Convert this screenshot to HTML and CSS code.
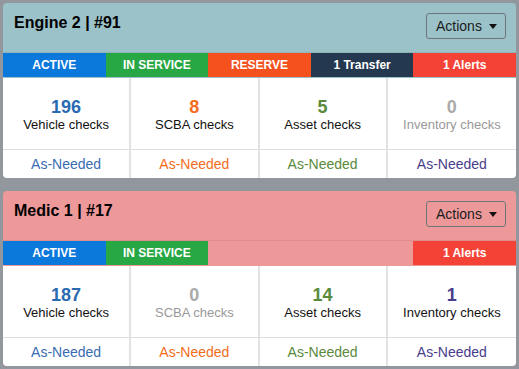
FILE: index.html
```html
<!DOCTYPE html>
<html>
<head>
<meta charset="utf-8">
<link rel="stylesheet" href="styles.css">
</head>
<body>
<div class="page">
  <div class="card card-teal">
    <div class="card-header">
      <div class="title">Engine 2 | #91</div>
      <div class="btn">Actions <span class="caret"></span></div>
    </div>
    <div class="status">
      <div class="seg s-active">ACTIVE</div>
      <div class="seg s-service">IN SERVICE</div>
      <div class="seg s-reserve">RESERVE</div>
      <div class="seg s-transfer">1 Transfer</div>
      <div class="seg s-alerts">1 Alerts</div>
    </div>
    <div class="body">
      <div class="cell top"><div class="num c-veh">196</div><div class="label">Vehicle checks</div></div>
      <div class="cell top"><div class="num c-scba">8</div><div class="label">SCBA checks</div></div>
      <div class="cell top"><div class="num c-asset">5</div><div class="label">Asset checks</div></div>
      <div class="cell top"><div class="num zero">0</div><div class="label zero-l">Inventory checks</div></div>
      <div class="cell bottom c-veh2">As-Needed</div>
      <div class="cell bottom c-scba">As-Needed</div>
      <div class="cell bottom c-asset">As-Needed</div>
      <div class="cell bottom c-inv">As-Needed</div>
    </div>
  </div>

  <div class="card card-pink">
    <div class="card-header">
      <div class="title">Medic 1 | #17</div>
      <div class="btn">Actions <span class="caret"></span></div>
    </div>
    <div class="status">
      <div class="seg s-active">ACTIVE</div>
      <div class="seg s-service">IN SERVICE</div>
      <div class="seg s-alerts last">1 Alerts</div>
    </div>
    <div class="body">
      <div class="cell top"><div class="num c-veh">187</div><div class="label">Vehicle checks</div></div>
      <div class="cell top"><div class="num zero">0</div><div class="label zero-l">SCBA checks</div></div>
      <div class="cell top"><div class="num c-asset">14</div><div class="label">Asset checks</div></div>
      <div class="cell top"><div class="num c-inv">1</div><div class="label">Inventory checks</div></div>
      <div class="cell bottom c-veh2">As-Needed</div>
      <div class="cell bottom c-scba">As-Needed</div>
      <div class="cell bottom c-asset">As-Needed</div>
      <div class="cell bottom c-inv">As-Needed</div>
    </div>
  </div>
</div>
</body>
</html>
```

FILE: styles.css
```css
html, body {
  margin: 0;
  padding: 0;
  background: #91979c;
}
body {
  font-family: "Liberation Sans", Arial, sans-serif;
  color: #111;
}
.page {
  padding: 3px 3px 0 3px;
  display: flex;
  flex-direction: column;
  gap: 13px;
}
.card {
  width: 513px;
  border-radius: 4px;
  overflow: hidden;
  padding-bottom: 0;
}
.card-teal { background: #9cc2c9; }
.card-pink { background: #ed999a; }
.card-header {
  box-sizing: border-box;
  height: 50px;
  padding: 10px 10px 0 11px;
  display: flex;
  justify-content: space-between;
  align-items: flex-start;
  border-bottom: 1px solid rgba(0,0,0,0.07);
}
.title {
  font-weight: bold;
  font-size: 16px;
  margin-top: 1px;
  color: #000;
}
.btn {
  box-sizing: border-box;
  height: 26px;
  width: 80px;
  border: 1px solid #6d757b;
  border-radius: 3px;
  font-size: 14px;
  line-height: 24px;
  padding: 0 0 0 9px;
  display: flex;
  align-items: center;
  gap: 7px;
  color: #1a1d20;
}
.caret {
  width: 0;
  height: 0;
  border-left: 4.5px solid transparent;
  border-right: 4.5px solid transparent;
  border-top: 5px solid #111;
}
.status {
  display: grid;
  grid-template-columns: repeat(5, 1fr);
  height: 24px;
  margin-bottom: 1px;
}
.seg {
  color: #fff;
  font-weight: bold;
  font-size: 12px;
  line-height: 24px;
  text-align: center;
}
.s-active { background: #0b78db; }
.s-service { background: #28a745; }
.s-reserve { background: #f5511f; }
.s-transfer { background: #24384f; }
.s-alerts { background: #f44336; }
.last { grid-column: 5; }
.body {
  background: #fff;
  display: grid;
  grid-template-columns: repeat(4, 1fr);
}
.cell {
  text-align: center;
  border-right: 2px solid #e2e2e2;
}
.cell:nth-child(4n) { border-right: none; }
.top {
  padding: 19px 0 16px;
  border-bottom: 1px solid #dedede;
}
.bottom {
  height: 28px;
  line-height: 28px;
  font-size: 14px;
}
.num {
  font-weight: bold;
  font-size: 18px;
  line-height: 20px;
}
.label {
  font-size: 13px;
  line-height: 16px;
  color: #111;
}
.c-veh { color: #2a6ab0; }
.c-veh2 { color: #3a6cb2; }
.c-scba { color: #f26d1c; }
.c-asset { color: #5a8a3c; }
.c-inv { color: #483d8b; }
.zero { color: #aaa; }
.label.zero-l { color: #999; }
```
